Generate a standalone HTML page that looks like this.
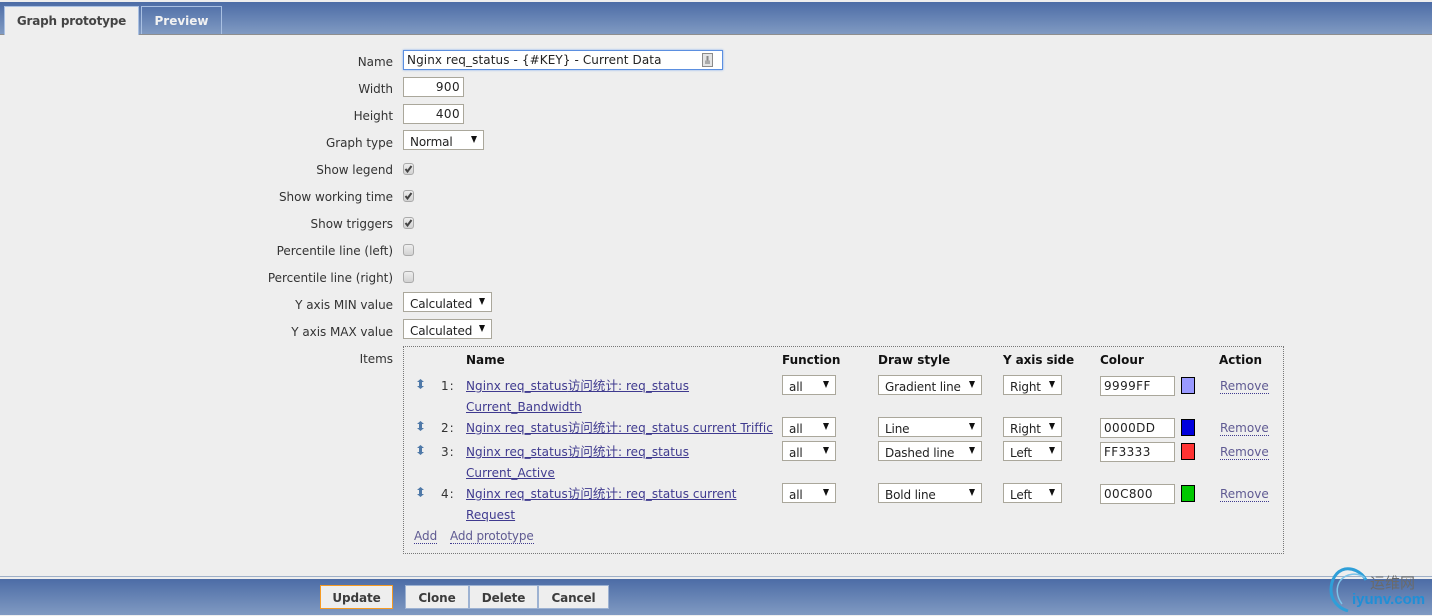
<!DOCTYPE html>
<html>
<head>
<meta charset="utf-8">
<style>
html,body{margin:0;padding:0}
body{width:1432px;height:616px;overflow:hidden;background:#eeeeee;position:relative;font-family:"DejaVu Sans","Noto Sans CJK SC",sans-serif;font-size:12px;color:#2a2a2a}
.a{position:absolute;white-space:nowrap}
.l{position:absolute;right:1039px;white-space:nowrap;line-height:16px;color:#333;letter-spacing:-.04px}
.box{position:absolute;box-sizing:border-box;background:#fff;border:1px solid #aaa79b;height:20px;line-height:18px;white-space:nowrap;color:#222}
.sel{padding-left:6px;padding-top:2px;line-height:18px;letter-spacing:-.15px}
.sel:after{content:"";position:absolute;right:6px;top:5px;border-left:3px solid transparent;border-right:3px solid transparent;border-top:7px solid #111}
.val{letter-spacing:.4px}
.cb{position:absolute;left:403px;width:11px;height:12px;box-sizing:border-box;border:1px solid #aaa;border-radius:3px;background:linear-gradient(#eee,#d2d2d2)}
.cb svg{position:absolute;left:0;top:0}
.lnk{position:absolute;white-space:nowrap;color:#3f3a8f;text-decoration:underline;line-height:14px;letter-spacing:.05px}
.lnk span{font-size:12.5px}
.th{position:absolute;font-weight:bold;color:#111;line-height:16px;white-space:nowrap}
.num{position:absolute;left:441px;line-height:14px;color:#333;letter-spacing:1px}
.rm{position:absolute;left:1220px;color:#5f5a92;border-bottom:1px dotted #3f3a8f;line-height:13px;white-space:nowrap}
.sw{position:absolute;left:1181px;width:14px;height:17px;box-sizing:border-box;border:1px solid #000}
.btn{position:absolute;top:585px;height:24px;box-sizing:border-box;background:#eeeeee;border:1px solid #9db2d2;font-weight:bold;text-align:center;line-height:24px;color:#3c3c3c;font-size:12px;letter-spacing:-.12px}
.drag{position:absolute;left:417px}
</style>
</head>
<body>
<div class="a" style="left:0;top:0;width:1432px;height:2px;background:#eee"></div>
<div class="a" style="left:0;top:2px;width:1432px;height:32px;background:linear-gradient(#4c6ca6,#809ac2)"></div>
<div class="a" style="left:0;top:34px;width:1432px;height:1px;background:#8e8e8e"></div>
<div class="a" style="left:4px;top:6px;width:135px;height:29px;box-sizing:border-box;background:#eee;border:1px solid #a9c0e2;border-bottom:none;font-weight:bold;font-size:12px;letter-spacing:-.2px;text-align:center;line-height:28px;color:#444">Graph prototype</div>
<div class="a" style="left:141px;top:6px;width:81px;height:28px;box-sizing:border-box;border:1px solid #a9c0e2;border-bottom:none;font-weight:bold;font-size:12px;text-align:center;line-height:28px;color:#f2f2f2">Preview</div>

<div class="l" style="top:54px">Name</div>
<div class="l" style="top:81px">Width</div>
<div class="l" style="top:108px">Height</div>
<div class="l" style="top:135px">Graph type</div>
<div class="l" style="top:162px">Show legend</div>
<div class="l" style="top:189px">Show working time</div>
<div class="l" style="top:216px">Show triggers</div>
<div class="l" style="top:243px">Percentile line (left)</div>
<div class="l" style="top:270px">Percentile line (right)</div>
<div class="l" style="top:297px">Y axis MIN value</div>
<div class="l" style="top:324px">Y axis MAX value</div>
<div class="l" style="top:351px">Items</div>

<div class="box" style="left:403px;top:50px;width:320px;height:20px;border:1px solid #5b8fe0;box-shadow:0 0 2px #7aa6ec;padding-left:3px;line-height:18px;letter-spacing:.1px">Nginx req_status - {#KEY} - Current Data</div>
<svg class="a" style="left:702px;top:53px" width="12" height="15" viewBox="0 0 12 15"><rect x="0.5" y="0.5" width="10" height="13" fill="#e4e4e4" stroke="#8a8a8a"/><rect x="3" y="7.5" width="5" height="3.5" fill="#aaa"/><rect x="4.5" y="3" width="2" height="4.5" fill="#888"/></svg>
<div class="box val" style="left:403px;top:77px;width:61px;text-align:right;padding-right:3px">900</div>
<div class="box val" style="left:403px;top:104px;width:61px;text-align:right;padding-right:3px">400</div>
<div class="box sel" style="left:403px;top:130px;width:81px">Normal</div>

<div class="cb" style="top:163px"><svg width="9" height="10" viewBox="0 0 9 10"><path d="M1.5 5 L3.5 7.5 L7.5 2" fill="none" stroke="#444" stroke-width="2"/></svg></div>
<div class="cb" style="top:190px"><svg width="9" height="10" viewBox="0 0 9 10"><path d="M1.5 5 L3.5 7.5 L7.5 2" fill="none" stroke="#444" stroke-width="2"/></svg></div>
<div class="cb" style="top:217px"><svg width="9" height="10" viewBox="0 0 9 10"><path d="M1.5 5 L3.5 7.5 L7.5 2" fill="none" stroke="#444" stroke-width="2"/></svg></div>
<div class="cb" style="top:244px"></div>
<div class="cb" style="top:271px"></div>

<div class="box sel" style="left:403px;top:292px;width:89px">Calculated</div>
<div class="box sel" style="left:403px;top:319px;width:89px">Calculated</div>

<div class="a" style="left:403px;top:346px;width:881px;height:208px;box-sizing:border-box;border:1px dotted #777"></div>

<div class="th" style="left:466px;top:352px">Name</div>
<div class="th" style="left:782px;top:352px">Function</div>
<div class="th" style="left:878px;top:352px">Draw style</div>
<div class="th" style="left:1003px;top:352px;letter-spacing:-.1px">Y axis side</div>
<div class="th" style="left:1100px;top:352px">Colour</div>
<div class="th" style="left:1219px;top:352px">Action</div>

<svg class="drag" style="top:379px" width="7" height="10" viewBox="0 0 7 10"><path d="M3.5 0 L7 3 H5 V7 H7 L3.5 10 L0 7 H2 V3 H0 Z" fill="#4f79a8"/></svg>
<svg class="drag" style="top:421px" width="7" height="10" viewBox="0 0 7 10"><path d="M3.5 0 L7 3 H5 V7 H7 L3.5 10 L0 7 H2 V3 H0 Z" fill="#4f79a8"/></svg>
<svg class="drag" style="top:445px" width="7" height="10" viewBox="0 0 7 10"><path d="M3.5 0 L7 3 H5 V7 H7 L3.5 10 L0 7 H2 V3 H0 Z" fill="#4f79a8"/></svg>
<svg class="drag" style="top:487px" width="7" height="10" viewBox="0 0 7 10"><path d="M3.5 0 L7 3 H5 V7 H7 L3.5 10 L0 7 H2 V3 H0 Z" fill="#4f79a8"/></svg>

<div class="num" style="top:379px">1:</div>
<div class="num" style="top:421px">2:</div>
<div class="num" style="top:445px">3:</div>
<div class="num" style="top:487px">4:</div>

<div class="lnk" style="left:466px;top:379px">Nginx req_status<span>访问统计</span>: req_status</div>
<div class="lnk" style="left:466px;top:400px">Current_Bandwidth</div>
<div class="lnk" style="left:466px;top:421px">Nginx req_status<span>访问统计</span>: req_status current Triffic</div>
<div class="lnk" style="left:466px;top:445px">Nginx req_status<span>访问统计</span>: req_status</div>
<div class="lnk" style="left:466px;top:466px">Current_Active</div>
<div class="lnk" style="left:466px;top:487px">Nginx req_status<span>访问统计</span>: req_status current</div>
<div class="lnk" style="left:466px;top:508px">Request</div>

<div class="a" style="left:414px;top:530px;line-height:13px;color:#5f5a92;border-bottom:1px dotted #3f3a8f">Add</div>
<div class="a" style="left:450px;top:530px;line-height:13px;color:#5f5a92;border-bottom:1px dotted #3f3a8f;letter-spacing:-.15px">Add prototype</div>

<div class="box sel" style="left:782px;top:375px;width:54px">all</div>
<div class="box sel" style="left:782px;top:417px;width:54px">all</div>
<div class="box sel" style="left:782px;top:441px;width:54px">all</div>
<div class="box sel" style="left:782px;top:483px;width:54px">all</div>

<div class="box sel" style="left:878px;top:375px;width:104px">Gradient line</div>
<div class="box sel" style="left:878px;top:417px;width:104px">Line</div>
<div class="box sel" style="left:878px;top:441px;width:104px">Dashed line</div>
<div class="box sel" style="left:878px;top:483px;width:104px">Bold line</div>

<div class="box sel" style="left:1003px;top:375px;width:59px">Right</div>
<div class="box sel" style="left:1003px;top:417px;width:59px">Right</div>
<div class="box sel" style="left:1003px;top:441px;width:59px">Left</div>
<div class="box sel" style="left:1003px;top:483px;width:59px">Left</div>

<div class="box val" style="left:1100px;top:376px;width:75px;padding-left:3px">9999FF</div>
<div class="box val" style="left:1100px;top:418px;width:75px;padding-left:3px">0000DD</div>
<div class="box val" style="left:1100px;top:442px;width:75px;padding-left:3px">FF3333</div>
<div class="box val" style="left:1100px;top:484px;width:75px;padding-left:3px">00C800</div>

<div class="sw" style="top:377px;background:#9999ff"></div>
<div class="sw" style="top:419px;background:#0000dd"></div>
<div class="sw" style="top:443px;background:#ff3333"></div>
<div class="sw" style="top:485px;background:#00c800"></div>

<div class="rm" style="top:380px">Remove</div>
<div class="rm" style="top:422px">Remove</div>
<div class="rm" style="top:446px">Remove</div>
<div class="rm" style="top:488px">Remove</div>

<div class="a" style="left:0;top:576px;width:1432px;height:1px;background:#9fb0c8"></div>
<div class="a" style="left:0;top:579px;width:1432px;height:36px;background:linear-gradient(#4c6ca6,#809ac2)"></div>
<div class="a" style="left:0;top:615px;width:1432px;height:1px;background:#eee"></div>

<div class="btn" style="left:320px;width:73px;border-color:#f59a23">Update</div>
<div class="btn" style="left:405px;width:64px">Clone</div>
<div class="btn" style="left:469px;width:69px">Delete</div>
<div class="btn" style="left:538px;width:71px">Cancel</div>

<svg class="a" style="left:1328px;top:566px" width="46" height="46" viewBox="0 0 46 46"><path d="M38 14 C33 5 24 2 17 3 C8 5 3 14 3 24 C3 34 10 42 20 45" fill="none" stroke="#2f9fd8" stroke-width="3"/><path d="M37 12 C30 6 18 7 12 15 C8 21 8 30 14 38" fill="none" stroke="#7cc4ea" stroke-width="1.5"/></svg>
<div class="a" style="left:1370px;top:574px;font-size:15px;line-height:18px;color:#6a6a6a;font-family:'Noto Sans CJK SC',sans-serif">运维网</div>
<div class="a" style="left:1352px;top:591px;font-size:15px;line-height:17px;font-weight:bold;color:#1f8fd6;font-family:'Liberation Sans',sans-serif">iyunv.com</div>
</body>
</html>
